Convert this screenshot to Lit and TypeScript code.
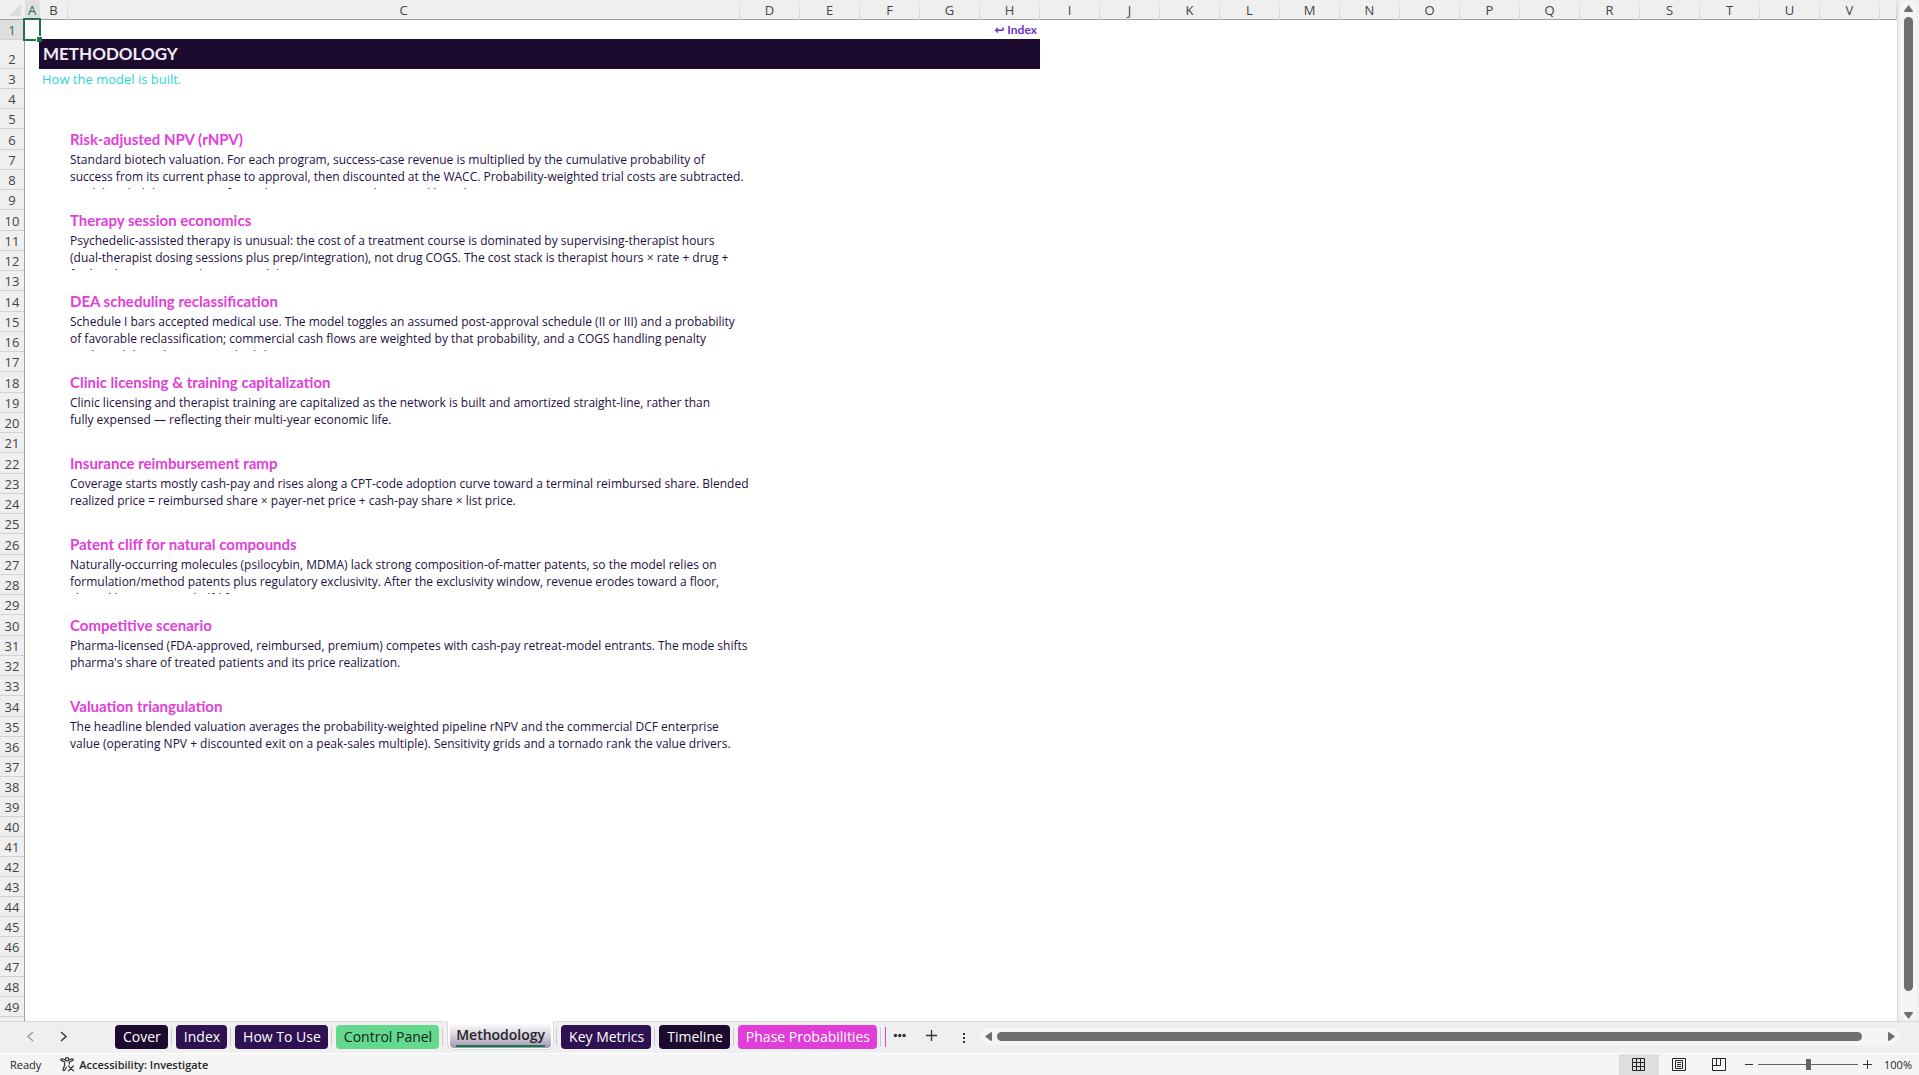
import { LitElement, html, css, svg } from "lit";
import { customElement, state } from "lit/decorators.js";
import { classMap } from "lit/directives/class-map.js";

const COLUMNS = "ABCDEFGHIJKLMNOPQRSTUV".split("");
const ROW_COUNT = 50;
const FIRST_TOPIC_ROW = 6;
const ROWS_PER_TOPIC = 4;

interface Topic {
  title: string;
  lines: string[];
}

const TOPICS: Topic[] = [
  {
    title: "Risk-adjusted NPV (rNPV)",
    lines: [
      "Standard biotech valuation. For each program, success-case revenue is multiplied by the cumulative probability of",
      "success from its current phase to approval, then discounted at the WACC. Probability-weighted trial costs are subtracted.",
      "Model probabilities convert for each program across phases and launch cases.",
    ],
  },
  {
    title: "Therapy session economics",
    lines: [
      "Psychedelic-assisted therapy is unusual: the cost of a treatment course is dominated by supervising-therapist hours",
      "(dual-therapist dosing sessions plus prep/integration), not drug COGS. The cost stack is therapist hours × rate + drug +",
      "facility charges across the care model.",
    ],
  },
  {
    title: "DEA scheduling reclassification",
    lines: [
      "Schedule I bars accepted medical use. The model toggles an assumed post-approval schedule (II or III) and a probability",
      "of favorable reclassification; commercial cash flows are weighted by that probability, and a COGS handling penalty",
      "applies while in the stricter schedule.",
    ],
  },
  {
    title: "Clinic licensing & training capitalization",
    lines: [
      "Clinic licensing and therapist training are capitalized as the network is built and amortized straight-line, rather than",
      "fully expensed — reflecting their multi-year economic life.",
    ],
  },
  {
    title: "Insurance reimbursement ramp",
    lines: [
      "Coverage starts mostly cash-pay and rises along a CPT-code adoption curve toward a terminal reimbursed share. Blended",
      "realized price = reimbursed share × payer-net price + cash-pay share × list price.",
    ],
  },
  {
    title: "Patent cliff for natural compounds",
    lines: [
      "Naturally-occurring molecules (psilocybin, MDMA) lack strong composition-of-matter patents, so the model relies on",
      "formulation/method patents plus regulatory exclusivity. After the exclusivity window, revenue erodes toward a floor,",
      "shaped by an erosion half-life.",
    ],
  },
  {
    title: "Competitive scenario",
    lines: [
      "Pharma-licensed (FDA-approved, reimbursed, premium) competes with cash-pay retreat-model entrants. The mode shifts",
      "pharma's share of treated patients and its price realization.",
    ],
  },
  {
    title: "Valuation triangulation",
    lines: [
      "The headline blended valuation averages the probability-weighted pipeline rNPV and the commercial DCF enterprise",
      "value (operating NPV + discounted exit on a peak-sales multiple). Sensitivity grids and a tornado rank the value drivers.",
    ],
  },
];

const TABS = [
  { name: "Cover", tone: "ink" },
  { name: "Index", tone: "plum" },
  { name: "How To Use", tone: "plum" },
  { name: "Control Panel", tone: "green" },
  { name: "Methodology", tone: "plum" },
  { name: "Key Metrics", tone: "plum" },
  { name: "Timeline", tone: "ink" },
  { name: "Phase Probabilities", tone: "pink" },
];

@customElement("sheet-grid")
export class SheetGrid extends LitElement {
  static styles = css`
    :host {
      display: block;
      min-width: 0;
      overflow: hidden;
      background: #fff;
      border-right: 1px solid #d9d9d9;
      font-family: "Open Sans", "Noto Sans", sans-serif;
    }
    table {
      width: 100%;
      table-layout: fixed;
      border-collapse: separate;
      border-spacing: 0;
    }
    th,
    td {
      box-sizing: border-box;
      height: 20px;
      padding: 0;
      vertical-align: top;
    }
    .w-rows { width: 25px; }
    .w-a { width: 15px; }
    .w-b { width: 28px; }
    .w-c { width: 672px; }
    .w-std { width: 60px; }
    th {
      background: #efefef;
      color: #444;
      font-size: 13px;
      font-weight: 400;
      line-height: 20px;
      text-align: center;
    }
    .col {
      border-right: 1px solid;
      border-image: linear-gradient(#efefef, #cfcfcf) 1;
      border-image-width: 0 1px 0 0;
      box-shadow: inset 0 -1px #9f9f9f;
    }
    .col.last { border-right: 0; }
    .corner { box-shadow: inset 0 -1px #9f9f9f; }
    .corner svg { display: block; margin: 4px 0 0 9px; }
    .row {
      vertical-align: bottom;
      border-right: 1px solid #9f9f9f;
      box-shadow: inset 0 -1px #d2d2d2;
    }
    .active {
      background: #dfdfdf;
      color: #1e7145;
    }
    .title-row th, .title-row td { height: 29px; }
    .heading-row th, .heading-row td { height: 21px; }
    .cursor-cell { position: relative; }
    .cursor {
      position: absolute;
      inset: -2px -1px -1px -2px;
      border: 2px solid #217346;
    }
    .cursor::after {
      content: "";
      position: absolute;
      right: -3px;
      bottom: -3px;
      width: 5px;
      height: 5px;
      background: #217346;
      border: solid #fff;
      border-width: 1px 0 0 1px;
    }
    .link-cell { text-align: right; }
    a {
      display: block;
      padding-right: 3px;
      color: #6a2fc8;
      font: 700 12px/20px Lato, "DejaVu Sans", sans-serif;
      text-decoration: none;
      white-space: nowrap;
    }
    .title {
      background: #1c0b2e;
      box-shadow: 0 -1px #1c0b2e, -1px 0 #1c0b2e, -1px -1px #1c0b2e;
    }
    h1 {
      margin: 0;
      padding-left: 3px;
      color: #f3eafa;
      font: 700 17px/28px Lato, sans-serif;
    }
    .subtitle {
      padding-left: 2px;
      color: #2fd3d6;
      font-size: 13px;
      line-height: 20px;
      white-space: nowrap;
    }
    h2 {
      margin: 0;
      padding-left: 2px;
      color: #e13ed9;
      font: 700 15px/21px Lato, sans-serif;
    }
    .copy {
      height: 38px;
      padding: 1px 0 0 2px;
      overflow: visible clip;
      color: #24103f;
      font-size: 12px;
      line-height: 17px;
      white-space: nowrap;
    }
    .copy p { margin: 0; }
  `;

  private cells(row: number) {
    if (row === 1) {
      return html`<td class="cursor-cell"><div class="cursor"></div></td>
        <td colspan="6"></td>
        <td class="link-cell"><a href="#index">↩ Index</a></td>
        <td colspan="15"></td>`;
    }
    if (row === 2) {
      return html`<td></td><td class="title" colspan="7"><h1>METHODOLOGY</h1></td><td colspan="15"></td>`;
    }
    if (row === 3) {
      return html`<td></td><td colspan="2"><div class="subtitle">How the model is built.</div></td><td colspan="20"></td>`;
    }
    const offset = row - FIRST_TOPIC_ROW;
    const topic = offset >= 0 ? TOPICS[Math.floor(offset / ROWS_PER_TOPIC)] : undefined;
    if (topic && offset % ROWS_PER_TOPIC === 0) {
      return html`<td colspan="2"></td><td><h2>${topic.title}</h2></td><td colspan="20"></td>`;
    }
    if (topic && offset % ROWS_PER_TOPIC === 1) {
      return html`<td colspan="2"></td>
        <td rowspan="2"><div class="copy">${topic.lines.map((l) => html`<p>${l}</p>`)}</div></td>
        <td colspan="20"></td>`;
    }
    if (topic && offset % ROWS_PER_TOPIC === 2) {
      return html`<td colspan="2"></td><td colspan="20"></td>`;
    }
    return html`<td colspan="23"></td>`;
  }

  render() {
    const rows = Array.from({ length: ROW_COUNT }, (_, i) => i + 1);
    const lastTopicRow = FIRST_TOPIC_ROW + TOPICS.length * ROWS_PER_TOPIC;
    return html`<table>
      <colgroup>
        <col class="w-rows" /><col class="w-a" /><col class="w-b" /><col class="w-c" />
        ${COLUMNS.slice(3).map(() => html`<col class="w-std" />`)}
        <col />
      </colgroup>
      <thead>
        <tr>
          <th class="corner"><svg width="12" height="12" aria-hidden="true"><path d="M12 0V12H0Z" fill="#dcdcdc" /></svg></th>
          ${COLUMNS.map((c) => html`<th scope="col" class=${classMap({ col: true, active: c === "A" })}>${c}</th>`)}
          <th class="col last"></th>
        </tr>
      </thead>
      <tbody>
        ${rows.map((r) => html`<tr
          class=${classMap({
            "title-row": r === 2,
            "heading-row": r >= FIRST_TOPIC_ROW && r < lastTopicRow && (r - FIRST_TOPIC_ROW) % ROWS_PER_TOPIC === 0,
          })}>
          <th scope="row" class=${classMap({ row: true, active: r === 1 })}>${r}</th>${this.cells(r)}
        </tr>`)}
      </tbody>
    </table>`;
  }
}

@customElement("scroll-bar")
export class ScrollBar extends LitElement {
  static properties = { vertical: { type: Boolean, reflect: true } };
  declare vertical: boolean;

  static styles = css`
    :host {
      display: flex;
      align-items: center;
      box-sizing: border-box;
      height: 17px;
      padding: 0 5px;
      border-radius: 9px;
      background: #f5f5f5;
    }
    :host([vertical]) {
      flex-direction: column;
      width: 17px;
      height: auto;
      padding: 5px 0 2px;
    }
    button {
      display: block;
      padding: 0;
      border: 0;
      background: none;
    }
    svg { display: block; fill: #6f6f6f; }
    .lane {
      flex: 1;
      display: flex;
      box-sizing: border-box;
      padding: 0 26px 0 5px;
    }
    .thumb {
      flex: 1;
      height: 9px;
      border-radius: 5px;
      background: #707070;
    }
    :host([vertical]) .lane { padding: 5px 0 21px; }
    :host([vertical]) .thumb { width: 9px; height: auto; }
  `;

  private arrow(label: string, path: string) {
    const [w, h] = this.vertical ? [9, 7] : [7, 9];
    return html`<button type="button" aria-label=${label}>
      <svg width=${w} height=${h} viewBox="0 0 ${w} ${h}">${svg`<path d=${path} />`}</svg>
    </button>`;
  }

  render() {
    return this.vertical
      ? html`${this.arrow("Scroll up", "M4.5 0L9 6Q9 7 8 7H1Q0 7 0 6Z")}
          <div class="lane"><div class="thumb"></div></div>
          ${this.arrow("Scroll down", "M4.5 7L9 1Q9 0 8 0H1Q0 0 0 1Z")}`
      : html`${this.arrow("Scroll left", "M0 4.5L6 0Q7 0 7 1V8Q7 9 6 9Z")}
          <div class="lane"><div class="thumb"></div></div>
          ${this.arrow("Scroll right", "M7 4.5L1 0Q0 0 0 1V8Q0 9 1 9Z")}`;
  }
}

@customElement("sheet-tabs")
export class SheetTabs extends LitElement {
  @state() private current = "Methodology";

  static styles = css`
    :host {
      display: flex;
      box-sizing: border-box;
      height: 33px;
      border-bottom: 1px solid #fff;
      background: #efefef;
      font-family: "Open Sans", "Noto Sans", sans-serif;
    }
    button {
      padding: 0;
      border: 0;
      background: none;
      font: inherit;
    }
    svg { display: block; }
    .nav {
      display: flex;
      gap: 20px;
      padding: 8px 41px 0 24px;
      align-items: flex-start;
    }
    .strip { display: flex; }
    .slot {
      display: flex;
      align-items: flex-start;
      border-top: 1px solid #d9d9d9;
      padding: 3px 4px 0;
      position: relative;
    }
    .slot::after {
      content: "";
      position: absolute;
      right: 0;
      top: 6px;
      width: 1px;
      height: 18px;
      background: #cbcbcb;
    }
    .nav, .tools { border-top: 1px solid #d9d9d9; }
    .tab {
      height: 24px;
      padding: 0 7px 0 8px;
      border-radius: 4px;
      color: #fff;
      font-size: 14px;
      line-height: 24px;
      white-space: nowrap;
    }
    .ink { background: #1c0b2e; }
    .plum { background: #2e1150; }
    .green { background: #62d98f; color: #10251a; }
    .pink { background: #e13ed9; }
    .slot.current {
      padding: 0;
      margin: 0 4px 0 5px;
      border-top-color: #fff;
      background: #fff;
      height: 27px;
      border-radius: 0 0 6px 6px;
      box-shadow: 0 1px #d9d9d9, 1px 0 #d9d9d9, -1px 0 #d9d9d9;
    }
    .slot.current::after { right: -4px; }
    .current .tab {
      margin: 1px 2px 0;
      height: 25px;
      padding: 0 6px;
      background: linear-gradient(#fff, #d3cbdb 55%, #a393b4);
      color: #262626;
      font-weight: 600;
      line-height: 22px;
    }
    .current span {
      display: block;
      height: 20px;
      border-bottom: 2px solid #107c41;
      line-height: 20px;
    }
    .filler {
      flex: 0 0 8px;
      border-top: 1px solid #d9d9d9;
    }
    .filler::before {
      content: "";
      display: block;
      width: 1px;
      height: 20px;
      margin: 5px 0 0 4px;
      background: #e13ed9;
    }
    .tools {
      flex: 1;
      display: flex;
      align-items: flex-start;
      padding: 6px 19px 0 4px;
    }
    .tools button { padding: 1px 0; }
    .tools .more { margin-right: 19px; }
    .tools .add { margin-right: 24px; }
    .tools .grip { margin-right: 14px; }
    scroll-bar { flex: 1; }
  `;

  render() {
    return html`
      <div class="nav">
        <button type="button" aria-label="Previous sheet"><svg width="13" height="13" fill="none" stroke="#9a9a9a" stroke-width="1.4"><path d="M9 2L4 6.500L9 11" /></svg></button>
        <button type="button" aria-label="Next sheet"><svg width="13" height="13" fill="none" stroke="#3a3a3a" stroke-width="1.5"><path d="M4 2L9 6.500L4 11" /></svg></button>
      </div>
      <div class="strip" role="tablist">
        ${TABS.map((t) => {
          const on = t.name === this.current;
          return html`<div class=${classMap({ slot: true, current: on })}>
            <button type="button" role="tab" aria-selected=${on}
              class=${classMap({ tab: true, [t.tone]: !on })}
              @click=${() => (this.current = t.name)}><span>${t.name}</span></button>
          </div>`;
        })}
      </div>
      <div class="filler"></div>
      <div class="tools">
        <button class="more" type="button" aria-label="All sheets"><svg width="13" height="13" fill="#333"><circle cx="2.500" cy="6.500" r="1.700" /><circle cx="6.800" cy="6.500" r="1.700" /><circle cx="11.100" cy="6.500" r="1.700" /></svg></button>
        <button class="add" type="button" aria-label="New sheet"><svg width="13" height="13" stroke="#333" stroke-width="1.300"><path d="M6.500 1V12M1 6.500H12" /></svg></button>
        <button class="grip" type="button" aria-label="Resize tab area"><svg width="4" height="15" fill="#333"><path d="M1 4h2v2H1zM1 8h2v2H1zM1 12h2v2H1z" /></svg></button>
        <scroll-bar></scroll-bar>
      </div>`;
  }
}

@customElement("status-bar")
export class StatusBar extends LitElement {
  @state() private view = "Normal";

  static styles = css`
    :host {
      display: flex;
      height: 21px;
      align-items: stretch;
      background: #f4f4f4;
      color: #262626;
      font: 11px/21px "Open Sans", "Noto Sans", sans-serif;
    }
    button {
      display: flex;
      align-items: center;
      padding: 0;
      border: 0;
      background: none;
      color: inherit;
      font: inherit;
    }
    svg { display: block; }
    .ready { padding: 0 19px 0 10px; }
    .check { gap: 4px; font-weight: 600; }
    .views { display: flex; margin-left: auto; }
    .view { width: 40px; justify-content: center; }
    .view.on { background: #dedede; }
    .zoom { display: flex; align-items: center; gap: 5px; padding: 0 7px 0 5px; }
    .level { padding-left: 7px; }
    input {
      appearance: none;
      width: 100px;
      height: 12px;
      margin: 0;
      background: linear-gradient(#666, #666) center / 100% 1px no-repeat;
    }
    input::-webkit-slider-thumb {
      appearance: none;
      width: 5px;
      height: 11px;
      background: #666;
    }
  `;

  private views = [
    { name: "Normal", d: "M.5 .5H12.500V12.500H.5ZM4.500 .5V12.500M8.500 .5V12.500M.5 4.500H12.500M.5 8.500H12.500" },
    { name: "Page Layout", d: "M.5 .5H13.500V12.500H.5ZM3.500 2.500H10.500V10.500H3.500ZM5 4.500H9M5 6.500H9M5 8.500H9" },
    { name: "Page Break Preview", d: "M.5 .5H13.500V12.500H.5ZM.5 7.500H8.500V.5M4.500 .5V7.500" },
  ];

  render() {
    return html`
      <span class="ready">Ready</span>
      <button class="check" type="button">
        <svg width="15" height="15" fill="none" stroke="#262626" stroke-width="1.100" stroke-linejoin="round" stroke-linecap="round">
          <circle cx="7" cy="2.300" r="1.700" />
          <path d="M5.300 3L2 1.800Q.5 1.800 .9 3.200L4.700 5V8L3 12.500Q3 14.300 4.500 13.400L6.300 10.200M8.700 3L12 1.800Q13.500 1.800 13.100 3.200L9.300 5V7" />
          <path d="M8.500 8.800L13.500 13.800M13.500 8.800L8.500 13.800" />
        </svg>
        <span>Accessibility: Investigate</span>
      </button>
      <div class="views">
        ${this.views.map((v) => html`<button type="button" aria-label=${v.name} aria-pressed=${v.name === this.view}
          class=${classMap({ view: true, on: v.name === this.view })} @click=${() => (this.view = v.name)}>
          <svg width="14" height="13" fill="none" stroke="#262626">${svg`<path d=${v.d} />`}</svg>
        </button>`)}
      </div>
      <div class="zoom">
        <button type="button" aria-label="Zoom out"><svg width="9" height="9" stroke="#333"><path d="M1 4.500H9" /></svg></button>
        <input type="range" min="10" max="190" value="100" aria-label="Zoom" />
        <button type="button" aria-label="Zoom in"><svg width="9" height="9" stroke="#333"><path d="M0 4.500H9M4.500 0V9" /></svg></button>
        <span class="level">100%</span>
      </div>`;
  }
}

@customElement("app-root")
export class AppRoot extends LitElement {
  static styles = css`
    :host {
      display: flex;
      flex-direction: column;
      height: 100vh;
      overflow: hidden;
      background: #efefef;
    }
    .work {
      flex: 1;
      min-height: 0;
      display: flex;
    }
    sheet-grid { flex: 1; }
    .rail {
      display: flex;
      padding: 0 2px;
    }
  `;

  render() {
    return html`
      <div class="work">
        <sheet-grid></sheet-grid>
        <div class="rail"><scroll-bar vertical></scroll-bar></div>
      </div>
      <sheet-tabs></sheet-tabs>
      <status-bar></status-bar>`;
  }
}
